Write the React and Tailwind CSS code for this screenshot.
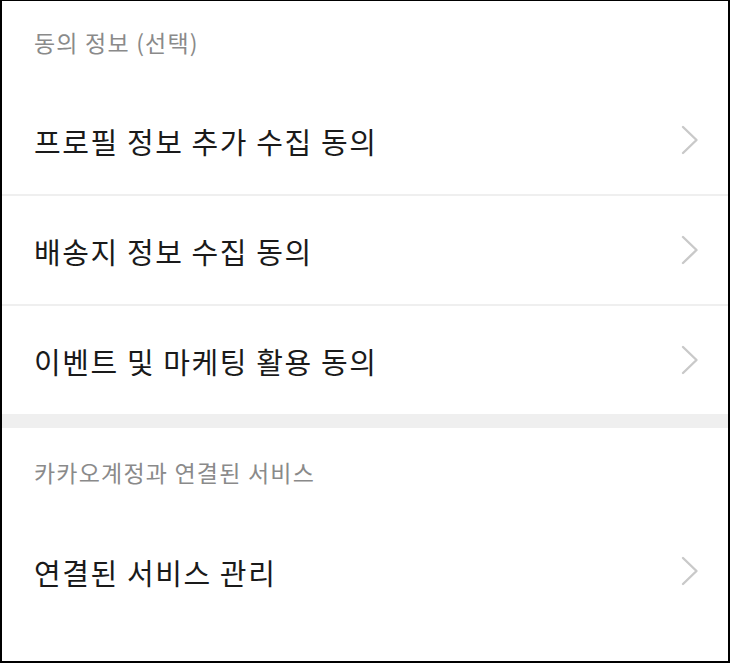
import React from 'react'

const font = { fontFamily: '"Noto Sans CJK KR", "Noto Sans", sans-serif' }

function Chevron() {
    return (
        <svg width="18" height="30" viewBox="0 0 18 30" fill="none" className="shrink-0">
            <path d="M2 2 L15.5 15 L2 28" stroke="#c9c9c9" strokeWidth="2.4" strokeLinecap="round" strokeLinejoin="round" />
        </svg>
    )
}

function Row({ label, last, className = 'h-[110px]' }) {
    return (
        <div className={`${className} flex items-center justify-between pl-[32px] pr-[29px] ${last ? '' : 'border-b-2 border-[#efefef]'}`}>
            <span className="text-[29px] text-[#1a1a1a] tracking-[1.6px] pt-[4px]">{label}</span>
            <Chevron />
        </div>
    )
}

export default function App() {
    return (
        <div className="w-[730px] h-[663px] bg-white border-l-2 border-r-2 border-t border-b-2 border-black overflow-hidden" style={font}>
            {/* 동의 정보 */}
            <div className="h-[85px] flex items-center pl-[32px] pb-[2px]">
                <span className="text-[23px] text-[#8a8a8a] tracking-[1.2px]">동의 정보 (선택)</span>
            </div>
            <Row label="프로필 정보 추가 수집 동의" />
            <Row label="배송지 정보 수집 동의" />
            <Row label="이벤트 및 마케팅 활용 동의" last className="h-[108px]" />

            <div className="h-[14px] bg-[#efefef]" />

            {/* 연결된 서비스 */}
            <div className="h-[88px] flex items-center pl-[32px]">
                <span className="text-[23px] text-[#8a8a8a] tracking-[1.2px]">카카오계정과 연결된 서비스</span>
            </div>
            <Row label="연결된 서비스 관리" last />
        </div>
    )
}
